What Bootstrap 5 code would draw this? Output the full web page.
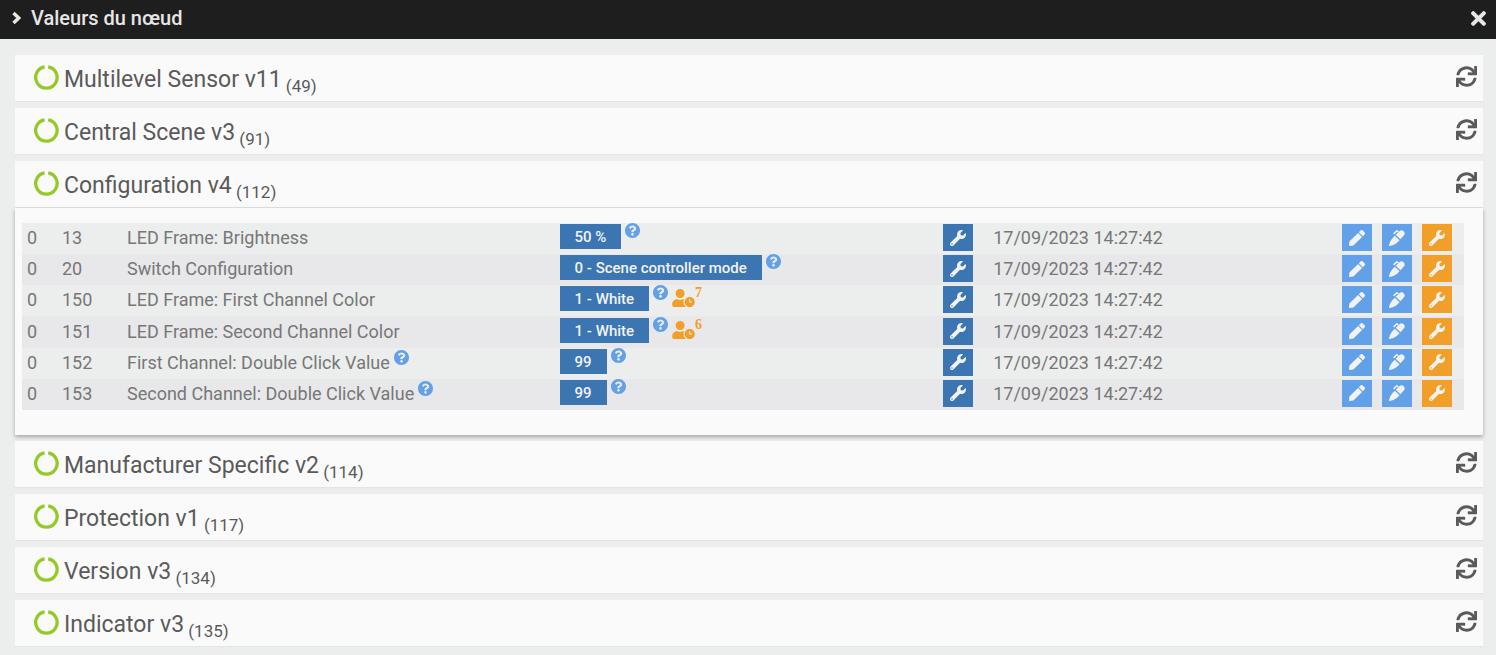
<!DOCTYPE html>
<html lang="fr">
<head>
<meta charset="utf-8">
<meta name="viewport" content="width=device-width, initial-scale=1">
<title>Valeurs du nœud</title>
<link href="https://cdn.jsdelivr.net/npm/bootstrap@5.3.0/dist/css/bootstrap.min.css" rel="stylesheet">
<style>
body{background:#eceeed;color:#5a5a5a;font-family:Roboto,"Liberation Sans",sans-serif;overflow-x:hidden}
svg{fill:currentColor}
.titlebar{background:#1e1e1e;color:#e6e6e6;height:39px;padding:0 10px 3px 12px;gap:10px}
.titlebar h1{font-size:20px;line-height:24px;font-weight:500}
.titlebar svg{display:block}
.plain-btn{border:0;background:none;color:inherit;padding:0}
.groups{padding:16px 13px 8px 15px;display:flex;flex-direction:column;gap:6px}
.group-head{background:#fafafa;height:47px;padding:0 6px 4px 19px;border-bottom:1px solid #e4e4e5}
.group-head a{display:flex;align-items:center;color:inherit;text-decoration:none}
.group-head h2{font-size:23px;line-height:32px;font-weight:400;margin:0}
.group-title{padding-top:8px}
.group-title sub{font-size:17px;bottom:-5px;line-height:0;white-space:pre}
.group-head svg{display:block}
.ring{fill:none;stroke:#94ca27;stroke-width:3.3;margin:2px 5px 0 0}
.group-body{background:#fafafa;padding:15px 19px 25px 7px;box-shadow:0 2px 4px rgba(0,0,0,.3)}
.values{width:100%;height:187px;table-layout:fixed;font-size:18px;line-height:20px;color:#777}
.values td{padding:0 0 1px 5px;vertical-align:middle;white-space:nowrap}
.values tr:nth-child(odd){background:#eceeed}
.values tr:nth-child(even){background:#e8e8ea}
.values td.cell-val{padding-bottom:4px}
.values td.cell-btn{padding-bottom:2px}
.c-end{width:35px}.c-prop{width:65px}.c-name{width:30%}.c-val{width:26.6%}.c-tool{width:50px}.c-act{width:127px}
.val{background:#3b76b3;color:#f2f2f2;font-size:15px;line-height:23px;font-weight:500;padding:2px 15px 0}
.help{color:#62a0e8;margin:-1px 0 0 4px}
.cell-name .help{vertical-align:4px;margin-top:-4px}
.wait{color:#f19f29;margin-left:4px}
.wait svg{margin-top:3px}
.wait sup{font:700 14px/14px "Liberation Serif",serif;top:0}
.sq{display:flex;align-items:center;justify-content:center;width:30px;height:27px;border:0;padding:0;color:#f2f2f2}
.sq-main{background:#3b76b3}.sq-info{background:#62a0e8}.sq-warn{background:#f19f29}
.acts{gap:10px}
</style>
<script src="https://cdn.jsdelivr.net/npm/bootstrap@5.3.0/dist/js/bootstrap.bundle.min.js"></script>
</head>
<body>
<svg width="0" height="0" class="position-absolute" aria-hidden="true">
<symbol id="sync" viewBox="0 0 512 512"><path d="M440.65 12.57l4 82.77A247.16 247.16 0 0 0 255.83 8C134.73 8 33.91 94.92 12.29 209.82A12 12 0 0 0 24.09 224h49.05a12 12 0 0 0 11.67-9.26 175.91 175.91 0 0 1 317-56.94l-101.46-4.86a12 12 0 0 0-12.57 12v47.41a12 12 0 0 0 12 12H500a12 12 0 0 0 12-12V12a12 12 0 0 0-12-12h-47.37a12 12 0 0 0-11.98 12.57zM255.83 432a175.61 175.61 0 0 1-146-77.8l101.8 4.87a12 12 0 0 0 12.57-12v-47.4a12 12 0 0 0-12-12H12a12 12 0 0 0-12 12V500a12 12 0 0 0 12 12h47.35a12 12 0 0 0 12-12.6l-4.15-82.57A247.17 247.17 0 0 0 255.83 504c121.11 0 221.93-86.92 243.55-201.82a12 12 0 0 0-11.8-14.18h-49.05a12 12 0 0 0-11.67 9.26A175.86 175.86 0 0 1 255.83 432z"/></symbol>
<symbol id="wrench" viewBox="0 0 512 512"><path d="M507.73 109.1c-2.24-9.03-13.54-12.09-20.12-5.51l-74.36 74.36-67.88-11.31-11.31-67.88 74.36-74.36c6.62-6.62 3.43-17.9-5.66-20.16-47.38-11.74-99.55.91-136.58 37.93-39.64 39.64-50.55 97.1-34.05 147.2L18.74 402.76c-24.99 24.99-24.99 65.51 0 90.5 24.99 24.99 65.51 24.99 90.5 0l213.21-213.21c50.12 16.71 107.47 5.68 147.37-34.22 37.07-37.07 49.7-89.32 37.91-136.73zM64 472c-13.25 0-24-10.75-24-24 0-13.26 10.75-24 24-24s24 10.74 24 24c0 13.25-10.75 24-24 24z"/></symbol>
<symbol id="pen" viewBox="0 0 512 512"><path d="M290.74 93.24l128.02 128.02-277.99 277.99-114.14 12.6C11.35 513.54-1.56 500.62.14 485.34l12.7-114.22 277.9-277.88zm207.2-19.06l-60.11-60.11c-18.75-18.75-49.16-18.75-67.91 0l-56.55 56.55 128.02 128.02 56.55-56.55c18.75-18.76 18.75-49.16 0-67.91z"/></symbol>
<symbol id="pen-alt" viewBox="0 0 512 512"><path d="M215 150L345 30Q375 0 415 10Q490 30 502 97Q512 135 480 170L367 298ZM185 180L340 330L250 418Q145 498 26 512Q0 512 0 485Q20 370 100 268ZM235 8Q252 -6 270 8L315 50L285 82L252 55L165 142L130 107Z"/></symbol>
<symbol id="question" viewBox="8 8 496 496"><path d="M504 256c0 136.997-111.043 248-248 248S8 392.997 8 256C8 119.083 119.043 8 256 8s248 111.083 248 248zM262.655 90c-54.497 0-89.255 22.957-116.549 63.758-3.536 5.286-2.353 12.415 2.715 16.258l34.699 26.31c5.205 3.947 12.621 3.008 16.665-2.122 17.864-22.658 30.113-35.797 57.303-35.797 20.429 0 45.698 13.148 45.698 32.958 0 14.976-12.363 22.667-32.534 33.976C247.128 238.528 216 254.941 216 296v4c0 6.627 5.373 12 12 12h56c6.627 0 12-5.373 12-12v-1.333c0-28.462 83.186-29.647 83.186-106.667 0-58.002-60.165-102-116.531-102zM256 338c-25.365 0-46 20.635-46 46 0 25.364 20.635 46 46 46s46-20.636 46-46c0-25.365-20.635-46-46-46z"/></symbol>
<symbol id="user-clock" viewBox="0 0 640 512"><path d="M496 224c-79.6 0-144 64.4-144 144s64.4 144 144 144 144-64.4 144-144-64.4-144-144-144zm64 150.3c0 5.3-4.4 9.7-9.7 9.7h-60.6c-5.3 0-9.7-4.4-9.7-9.7v-76.6c0-5.3 4.4-9.7 9.7-9.7h12.6c5.3 0 9.7 4.4 9.7 9.7V352h38.3c5.3 0 9.7 4.4 9.7 9.7v12.6zM320 368c0-27.8 6.7-54.1 18.2-77.5-8-1.5-16.2-2.5-24.6-2.5h-16.7c-22.2 10.2-46.9 16-72.9 16s-50.6-5.8-72.9-16h-16.7C60.2 288 0 348.2 0 422.4V464c0 26.5 21.5 48 48 48h347.1c-45.3-31.9-75.1-84.5-75.1-144zm-96-112c70.7 0 128-57.3 128-128S294.7 0 224 0 96 57.3 96 128s57.3 128 128 128z"/></symbol>
<symbol id="ring" viewBox="0 0 25 25"><path d="M14.2 1.900A10.700 10.700 0 1 1 10.600 1.900"/></symbol>
<symbol id="times" viewBox="0 80 352 352"><path d="M242.72 256l100.07-100.07c12.28-12.28 12.28-32.19 0-44.48l-22.24-22.24c-12.28-12.28-32.19-12.28-44.48 0L176 189.28 75.93 89.21c-12.28-12.28-32.19-12.28-44.48 0L9.21 111.45c-12.28 12.28-12.28 32.19 0 44.48L109.28 256 9.21 356.07c-12.28 12.28-12.28 32.19 0 44.48l22.24 22.24c12.28 12.28 32.2 12.28 44.48 0L176 322.72l100.07 100.07c12.28 12.28 32.2 12.28 44.48 0l22.24-22.24c12.28-12.28 12.28-32.19 0-44.48L242.72 256z"/></symbol>
</svg>

<header class="titlebar d-flex align-items-center">
  <svg width="9" height="14" viewBox="0 0 9 14" aria-hidden="true"><path d="M1.500 2L6.700 7L1.500 12" fill="none" stroke="currentColor" stroke-width="3.400"/></svg>
  <h1 class="mb-0 flex-grow-1">Valeurs du nœud</h1>
  <button class="plain-btn" type="button" aria-label="Fermer"><svg width="15" height="15"><use href="#times"/></svg></button>
</header>

<main class="groups">
  <section class="group-head d-flex align-items-center justify-content-between"><h2><a href="#g49"><svg class="ring" width="25" height="25"><use href="#ring"/></svg><span class="group-title">Multilevel Sensor v11<sub> (49)</sub></span></a></h2><button class="plain-btn" type="button" aria-label="Rafraîchir"><svg width="21" height="21"><use href="#sync"/></svg></button></section>
  <section class="group-head d-flex align-items-center justify-content-between"><h2><a href="#g91"><svg class="ring" width="25" height="25"><use href="#ring"/></svg><span class="group-title">Central Scene v3<sub> (91)</sub></span></a></h2><button class="plain-btn" type="button" aria-label="Rafraîchir"><svg width="21" height="21"><use href="#sync"/></svg></button></section>
  <section>
    <div class="group-head d-flex align-items-center justify-content-between"><h2><a href="#g112"><svg class="ring" width="25" height="25"><use href="#ring"/></svg><span class="group-title">Configuration v4<sub> (112)</sub></span></a></h2><button class="plain-btn" type="button" aria-label="Rafraîchir"><svg width="21" height="21"><use href="#sync"/></svg></button></div>
    <div class="group-body" id="g112">
      <table class="values">
        <colgroup><col class="c-end"><col class="c-prop"><col class="c-name"><col class="c-val"><col class="c-tool"><col><col class="c-act"></colgroup>
        <tbody>
        <tr><td>0</td><td>13</td><td class="cell-name">LED Frame: Brightness</td>
          <td class="cell-val"><div class="d-flex align-items-start"><span class="val">50 %</span><svg class="help" width="15" height="15"><use href="#question"/></svg></div></td>
          <td class="cell-btn"><button class="sq sq-main" type="button" aria-label="Configurer"><svg width="16" height="16"><use href="#wrench"/></svg></button></td><td>17/09/2023 14:27:42</td>
          <td class="cell-btn"><div class="d-flex acts"><button class="sq sq-info" type="button" aria-label="Modifier"><svg width="16" height="16"><use href="#pen"/></svg></button><button class="sq sq-info" type="button" aria-label="Saisir"><svg width="16" height="16"><use href="#pen-alt"/></svg></button><button class="sq sq-warn" type="button" aria-label="Réglages"><svg width="16" height="16"><use href="#wrench"/></svg></button></div></td></tr>
        <tr><td>0</td><td>20</td><td class="cell-name">Switch Configuration</td>
          <td class="cell-val"><div class="d-flex align-items-start"><span class="val">0 - Scene controller mode</span><svg class="help" width="15" height="15"><use href="#question"/></svg></div></td>
          <td class="cell-btn"><button class="sq sq-main" type="button" aria-label="Configurer"><svg width="16" height="16"><use href="#wrench"/></svg></button></td><td>17/09/2023 14:27:42</td>
          <td class="cell-btn"><div class="d-flex acts"><button class="sq sq-info" type="button" aria-label="Modifier"><svg width="16" height="16"><use href="#pen"/></svg></button><button class="sq sq-info" type="button" aria-label="Saisir"><svg width="16" height="16"><use href="#pen-alt"/></svg></button><button class="sq sq-warn" type="button" aria-label="Réglages"><svg width="16" height="16"><use href="#wrench"/></svg></button></div></td></tr>
        <tr><td>0</td><td>150</td><td class="cell-name">LED Frame: First Channel Color</td>
          <td class="cell-val"><div class="d-flex align-items-start"><span class="val">1 - White</span><svg class="help" width="15" height="15"><use href="#question"/></svg><span class="wait d-flex align-items-start"><svg width="23" height="18"><use href="#user-clock"/></svg><sup>7</sup></span></div></td>
          <td class="cell-btn"><button class="sq sq-main" type="button" aria-label="Configurer"><svg width="16" height="16"><use href="#wrench"/></svg></button></td><td>17/09/2023 14:27:42</td>
          <td class="cell-btn"><div class="d-flex acts"><button class="sq sq-info" type="button" aria-label="Modifier"><svg width="16" height="16"><use href="#pen"/></svg></button><button class="sq sq-info" type="button" aria-label="Saisir"><svg width="16" height="16"><use href="#pen-alt"/></svg></button><button class="sq sq-warn" type="button" aria-label="Réglages"><svg width="16" height="16"><use href="#wrench"/></svg></button></div></td></tr>
        <tr><td>0</td><td>151</td><td class="cell-name">LED Frame: Second Channel Color</td>
          <td class="cell-val"><div class="d-flex align-items-start"><span class="val">1 - White</span><svg class="help" width="15" height="15"><use href="#question"/></svg><span class="wait d-flex align-items-start"><svg width="23" height="18"><use href="#user-clock"/></svg><sup>6</sup></span></div></td>
          <td class="cell-btn"><button class="sq sq-main" type="button" aria-label="Configurer"><svg width="16" height="16"><use href="#wrench"/></svg></button></td><td>17/09/2023 14:27:42</td>
          <td class="cell-btn"><div class="d-flex acts"><button class="sq sq-info" type="button" aria-label="Modifier"><svg width="16" height="16"><use href="#pen"/></svg></button><button class="sq sq-info" type="button" aria-label="Saisir"><svg width="16" height="16"><use href="#pen-alt"/></svg></button><button class="sq sq-warn" type="button" aria-label="Réglages"><svg width="16" height="16"><use href="#wrench"/></svg></button></div></td></tr>
        <tr><td>0</td><td>152</td><td class="cell-name">First Channel: Double Click Value<svg class="help" width="15" height="15"><use href="#question"/></svg></td>
          <td class="cell-val"><div class="d-flex align-items-start"><span class="val">99</span><svg class="help" width="15" height="15"><use href="#question"/></svg></div></td>
          <td class="cell-btn"><button class="sq sq-main" type="button" aria-label="Configurer"><svg width="16" height="16"><use href="#wrench"/></svg></button></td><td>17/09/2023 14:27:42</td>
          <td class="cell-btn"><div class="d-flex acts"><button class="sq sq-info" type="button" aria-label="Modifier"><svg width="16" height="16"><use href="#pen"/></svg></button><button class="sq sq-info" type="button" aria-label="Saisir"><svg width="16" height="16"><use href="#pen-alt"/></svg></button><button class="sq sq-warn" type="button" aria-label="Réglages"><svg width="16" height="16"><use href="#wrench"/></svg></button></div></td></tr>
        <tr><td>0</td><td>153</td><td class="cell-name">Second Channel: Double Click Value<svg class="help" width="15" height="15"><use href="#question"/></svg></td>
          <td class="cell-val"><div class="d-flex align-items-start"><span class="val">99</span><svg class="help" width="15" height="15"><use href="#question"/></svg></div></td>
          <td class="cell-btn"><button class="sq sq-main" type="button" aria-label="Configurer"><svg width="16" height="16"><use href="#wrench"/></svg></button></td><td>17/09/2023 14:27:42</td>
          <td class="cell-btn"><div class="d-flex acts"><button class="sq sq-info" type="button" aria-label="Modifier"><svg width="16" height="16"><use href="#pen"/></svg></button><button class="sq sq-info" type="button" aria-label="Saisir"><svg width="16" height="16"><use href="#pen-alt"/></svg></button><button class="sq sq-warn" type="button" aria-label="Réglages"><svg width="16" height="16"><use href="#wrench"/></svg></button></div></td></tr>
        </tbody>
      </table>
    </div>
  </section>
  <section class="group-head d-flex align-items-center justify-content-between"><h2><a href="#g114"><svg class="ring" width="25" height="25"><use href="#ring"/></svg><span class="group-title">Manufacturer Specific v2<sub> (114)</sub></span></a></h2><button class="plain-btn" type="button" aria-label="Rafraîchir"><svg width="21" height="21"><use href="#sync"/></svg></button></section>
  <section class="group-head d-flex align-items-center justify-content-between"><h2><a href="#g117"><svg class="ring" width="25" height="25"><use href="#ring"/></svg><span class="group-title">Protection v1<sub> (117)</sub></span></a></h2><button class="plain-btn" type="button" aria-label="Rafraîchir"><svg width="21" height="21"><use href="#sync"/></svg></button></section>
  <section class="group-head d-flex align-items-center justify-content-between"><h2><a href="#g134"><svg class="ring" width="25" height="25"><use href="#ring"/></svg><span class="group-title">Version v3<sub> (134)</sub></span></a></h2><button class="plain-btn" type="button" aria-label="Rafraîchir"><svg width="21" height="21"><use href="#sync"/></svg></button></section>
  <section class="group-head d-flex align-items-center justify-content-between"><h2><a href="#g135"><svg class="ring" width="25" height="25"><use href="#ring"/></svg><span class="group-title">Indicator v3<sub> (135)</sub></span></a></h2><button class="plain-btn" type="button" aria-label="Rafraîchir"><svg width="21" height="21"><use href="#sync"/></svg></button></section>
</main>
</body>
</html>
